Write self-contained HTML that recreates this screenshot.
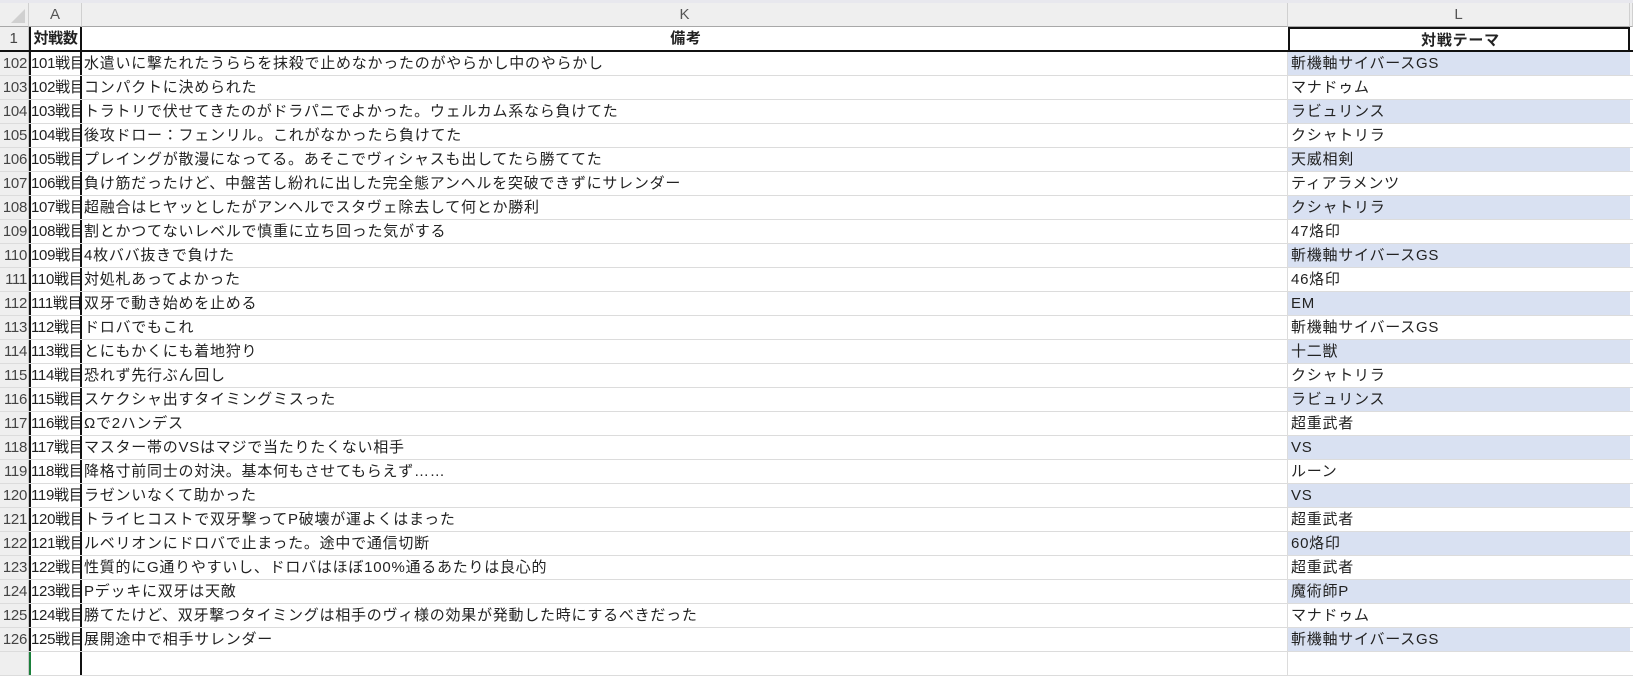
<!DOCTYPE html>
<html><head><meta charset="utf-8"><style>
*{margin:0;padding:0;box-sizing:border-box}
body{width:1633px;height:656px;background:#fff;position:relative;overflow:hidden;font-family:"Liberation Sans","Noto Sans CJK JP",sans-serif;font-size:15px;color:#222}
.top{position:absolute;left:0;top:0;width:1633px;height:3px;background:#e8e8ee}
.hdr{position:absolute;top:3px;height:24px;background:#efefef;border-right:1px solid #d0d0d0;border-bottom:1px solid #a8a8a8;color:#555;text-align:center;line-height:23px;font-size:15px}
.r{position:absolute;left:0;width:1633px;height:24px;border-bottom:1px solid #dcdcdc}
.c{position:absolute;top:0;height:23px;line-height:23px;white-space:nowrap;overflow:hidden}
.rh{left:0;width:29px;background:#efefef;color:#444;text-align:right;padding-right:1px;border-right:1px solid #c8c8c8;font-size:15px;letter-spacing:-0.3px}
.a{left:29px;width:53px;border-left:2px solid #111;border-right:2px solid #111;padding-left:0px;letter-spacing:-0.3px}
.k{left:82px;width:1206px;padding-left:2px;border-right:1px solid #dcdcdc;letter-spacing:0.75px}
.l{left:1288px;width:342px;padding-left:3px;letter-spacing:0.75px}
.b{background:#d9e1f2}
</style></head><body>
<div class="top"></div>
<div class="hdr" style="left:0;width:29px"><div style="position:absolute;right:3px;bottom:3px;width:0;height:0;border-left:14px solid transparent;border-bottom:14px solid #d0d0d0"></div></div>
<div class="hdr" style="left:29px;width:53px">A</div>
<div class="hdr" style="left:82px;width:1206px">K</div>
<div class="hdr" style="left:1288px;width:342px">L</div>
<div class="hdr" style="left:1630px;width:3px"></div>
<div class="r" style="top:27px;height:25px;border-bottom:2px solid #111">
<div class="c rh" style="text-align:center">1</div>
<div class="c a" style="font-weight:bold;text-align:center;height:23px">対戦数</div>
<div class="c k" style="font-weight:bold;text-align:center;border-right:none">備考</div>
<div class="c l" style="font-weight:bold;text-align:center;border:2px solid #111;border-bottom:none;height:23px">対戦テーマ</div>
</div>
<div style="position:absolute;top:52px;left:0">
<div class="r" style="top:0px"><div class="c rh">102</div><div class="c a">101戦目</div><div class="c k">水遣いに撃たれたうららを抹殺で止めなかったのがやらかし中のやらかし</div><div class="c l b">斬機軸サイバースGS</div></div>
<div class="r" style="top:24px"><div class="c rh">103</div><div class="c a">102戦目</div><div class="c k">コンパクトに決められた</div><div class="c l">マナドゥム</div></div>
<div class="r" style="top:48px"><div class="c rh">104</div><div class="c a">103戦目</div><div class="c k">トラトリで伏せてきたのがドラパニでよかった。ウェルカム系なら負けてた</div><div class="c l b">ラビュリンス</div></div>
<div class="r" style="top:72px"><div class="c rh">105</div><div class="c a">104戦目</div><div class="c k">後攻ドロー：フェンリル。これがなかったら負けてた</div><div class="c l">クシャトリラ</div></div>
<div class="r" style="top:96px"><div class="c rh">106</div><div class="c a">105戦目</div><div class="c k">プレイングが散漫になってる。あそこでヴィシャスも出してたら勝ててた</div><div class="c l b">天威相剣</div></div>
<div class="r" style="top:120px"><div class="c rh">107</div><div class="c a">106戦目</div><div class="c k">負け筋だったけど、中盤苦し紛れに出した完全態アンヘルを突破できずにサレンダー</div><div class="c l">ティアラメンツ</div></div>
<div class="r" style="top:144px"><div class="c rh">108</div><div class="c a">107戦目</div><div class="c k">超融合はヒヤッとしたがアンヘルでスタヴェ除去して何とか勝利</div><div class="c l b">クシャトリラ</div></div>
<div class="r" style="top:168px"><div class="c rh">109</div><div class="c a">108戦目</div><div class="c k">割とかつてないレベルで慎重に立ち回った気がする</div><div class="c l">47烙印</div></div>
<div class="r" style="top:192px"><div class="c rh">110</div><div class="c a">109戦目</div><div class="c k">4枚ババ抜きで負けた</div><div class="c l b">斬機軸サイバースGS</div></div>
<div class="r" style="top:216px"><div class="c rh">111</div><div class="c a">110戦目</div><div class="c k">対処札あってよかった</div><div class="c l">46烙印</div></div>
<div class="r" style="top:240px"><div class="c rh">112</div><div class="c a">111戦目</div><div class="c k">双牙で動き始めを止める</div><div class="c l b">EM</div></div>
<div class="r" style="top:264px"><div class="c rh">113</div><div class="c a">112戦目</div><div class="c k">ドロバでもこれ</div><div class="c l">斬機軸サイバースGS</div></div>
<div class="r" style="top:288px"><div class="c rh">114</div><div class="c a">113戦目</div><div class="c k">とにもかくにも着地狩り</div><div class="c l b">十二獣</div></div>
<div class="r" style="top:312px"><div class="c rh">115</div><div class="c a">114戦目</div><div class="c k">恐れず先行ぶん回し</div><div class="c l">クシャトリラ</div></div>
<div class="r" style="top:336px"><div class="c rh">116</div><div class="c a">115戦目</div><div class="c k">スケクシャ出すタイミングミスった</div><div class="c l b">ラビュリンス</div></div>
<div class="r" style="top:360px"><div class="c rh">117</div><div class="c a">116戦目</div><div class="c k">Ωで2ハンデス</div><div class="c l">超重武者</div></div>
<div class="r" style="top:384px"><div class="c rh">118</div><div class="c a">117戦目</div><div class="c k">マスター帯のVSはマジで当たりたくない相手</div><div class="c l b">VS</div></div>
<div class="r" style="top:408px"><div class="c rh">119</div><div class="c a">118戦目</div><div class="c k">降格寸前同士の対決。基本何もさせてもらえず……</div><div class="c l">ルーン</div></div>
<div class="r" style="top:432px"><div class="c rh">120</div><div class="c a">119戦目</div><div class="c k">ラゼンいなくて助かった</div><div class="c l b">VS</div></div>
<div class="r" style="top:456px"><div class="c rh">121</div><div class="c a">120戦目</div><div class="c k">トライヒコストで双牙撃ってP破壊が運よくはまった</div><div class="c l">超重武者</div></div>
<div class="r" style="top:480px"><div class="c rh">122</div><div class="c a">121戦目</div><div class="c k">ルベリオンにドロバで止まった。途中で通信切断</div><div class="c l b">60烙印</div></div>
<div class="r" style="top:504px"><div class="c rh">123</div><div class="c a">122戦目</div><div class="c k">性質的にG通りやすいし、ドロバはほぼ100%通るあたりは良心的</div><div class="c l">超重武者</div></div>
<div class="r" style="top:528px"><div class="c rh">124</div><div class="c a">123戦目</div><div class="c k">Pデッキに双牙は天敵</div><div class="c l b">魔術師P</div></div>
<div class="r" style="top:552px"><div class="c rh">125</div><div class="c a">124戦目</div><div class="c k">勝てたけど、双牙撃つタイミングは相手のヴィ様の効果が発動した時にするべきだった</div><div class="c l">マナドゥム</div></div>
<div class="r" style="top:576px"><div class="c rh">126</div><div class="c a">125戦目</div><div class="c k">展開途中で相手サレンダー</div><div class="c l b">斬機軸サイバースGS</div></div>
<div class="r" style="top:600px"><div class="c rh"></div><div class="c a" style="border-left-color:#1a7f3a"></div><div class="c k"></div><div class="c l"></div></div>
</div>
</body></html>
